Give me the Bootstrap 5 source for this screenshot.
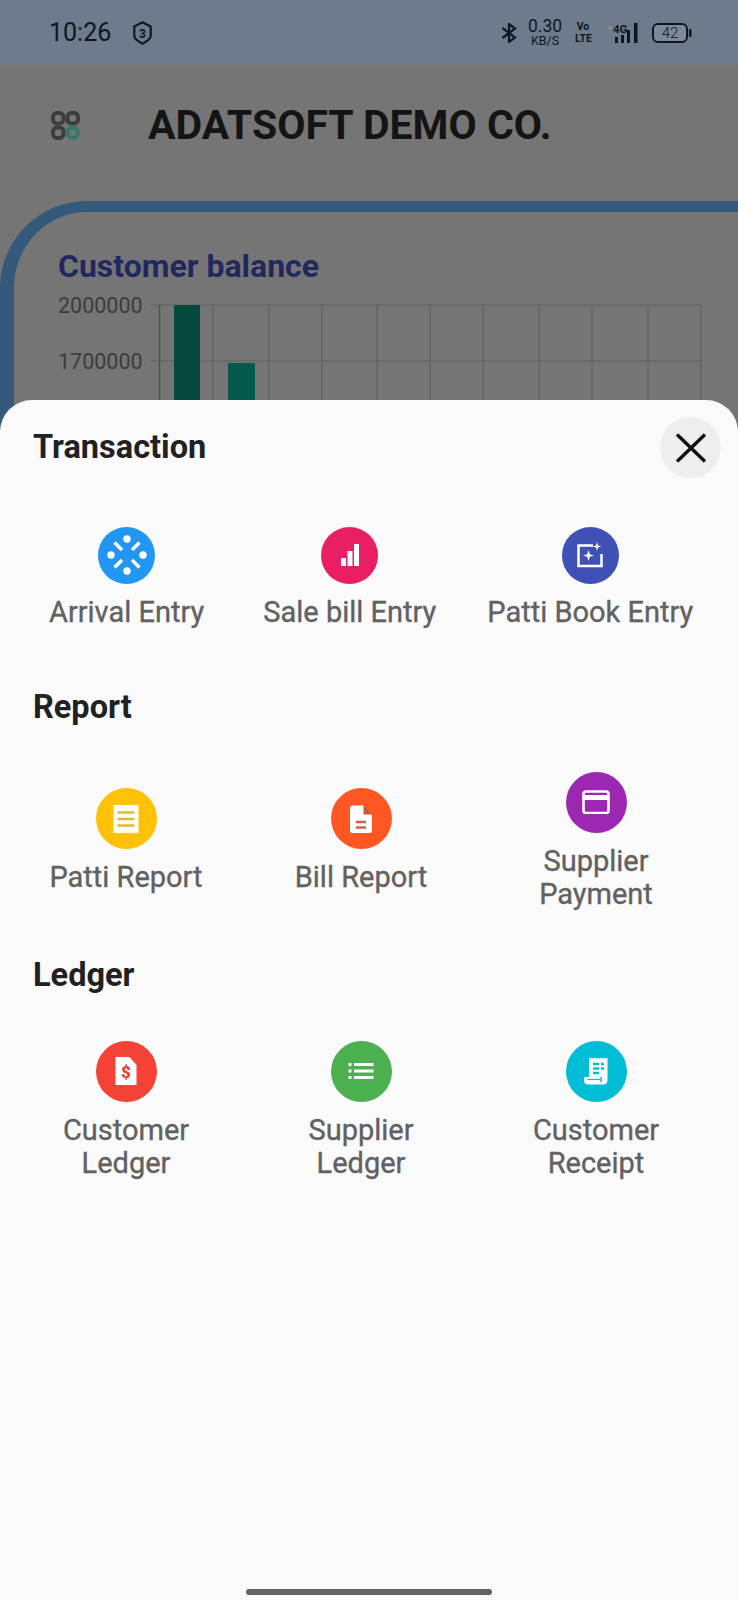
<!doctype html>
<html lang="en"><head><meta charset="utf-8"><title>Adatsoft</title>
<link href="https://cdn.jsdelivr.net/npm/bootstrap@5.3.0/dist/css/bootstrap.min.css" rel="stylesheet">
<style>
html,body{margin:0;height:1600px;overflow:hidden;background:#757575}
body{font-family:Roboto,"Liberation Sans",sans-serif;width:738px;position:relative}
.sbar{height:65px;background:#6d7b8d;padding:0 46px 0 49px;color:#10161f}
.clock{font-size:25px;font-weight:400;line-height:1}
.shield{margin-left:22px}
.speed{width:36px;margin-left:10px;text-align:center;line-height:1}
.speed-a{font-size:17.500px}
.speed-b{font-size:12.500px}
.volte{width:16px;margin-left:12px;font-size:10.500px;font-weight:700;line-height:11.500px;text-align:center}
.net{margin-left:17px}
.batt{margin-left:11px}
.appbar{height:136px;padding:0 0 16px 51px}
.apptitle{margin:0 0 0 68px;font-size:41px;font-weight:700;color:#141414;line-height:1}
.frame{height:1400px;border-top:11px solid #34597a;border-left:14px solid #34597a;border-top-left-radius:87px;padding:37px 0 0 44px}
.frametitle{margin:0;font-size:32px;font-weight:700;color:#22285f;line-height:35px}
.plot{display:block;margin:9px 0 0 -58px}
.sheet{position:absolute;left:0;right:0;top:400px;bottom:0;background:#fafafa;border-radius:32px 32px 0 0;padding-top:29px}
.closebtn{position:absolute;top:17px;right:17px;width:61px;height:61px;background:#eee}
.sect{margin:0 0 0 33px;font-size:32.500px;font-weight:700;color:#212121;line-height:37.500px}
.txrow{padding-left:49px;margin-top:60px}
.txa{margin-right:59px}.txb{margin-right:51px}
.dot{width:61px;height:61px}
.dot-s{width:57px;height:57px}
.lbl{font-size:29px;line-height:32.800px;color:#616161;font-weight:400;text-align:center;margin-top:12px;-webkit-text-stroke:.35px #616161}
.gridrow{width:705px;margin-left:8.500px}
.r2{margin-top:45px}
.r3{margin-top:46px}
.s2{margin-top:61px}
.s3{margin-top:47px}
.c-blue{background:#2196f3}.c-pink{background:#e91e63}.c-ind{background:#3f51b5}
.c-amb{background:#ffc107}.c-org{background:#ff5722}.c-pur{background:#9c27b0}
.c-red{background:#f44336}.c-grn{background:#4caf50}.c-cyn{background:#00bcd4}
.handle{position:absolute;left:246px;top:1189px;width:246px;height:6px;background:#616161}
</style></head><body>
<div class="sbar d-flex align-items-center">
 <span class="clock">10:26</span>
 <svg class="shield" width="19" height="24" viewBox="0 0 19 24"><path d="M9.500 1.300 17.700 5.500V15c0 2.500-4 5.500-8.200 7.700C5.300 20.500 1.300 17.500 1.300 15V5.500Z" fill="none" stroke="#10161f" stroke-width="2.200" stroke-linejoin="round"/><text x="9.500" y="16.500" font-size="12" font-weight="700" text-anchor="middle" fill="#10161f" font-family="Roboto">3</text></svg>
 <div class="ms-auto d-flex align-items-center">
  <svg width="16" height="20" viewBox="0 0 16 20"><path d="M1.500 5 14 14.500 8 19V1l6 4.500L1.500 15" fill="none" stroke="#10161f" stroke-width="2.200"/></svg>
  <div class="speed"><div class="speed-a">0.30</div><div class="speed-b">KB/S</div></div>
  <div class="volte"><div>Vo</div><div>LTE</div></div>
  <svg class="net" width="33" height="22" viewBox="0 0 33 22"><circle cx="2" cy="6" r="2" fill="#7f8b9b"/><text x="5" y="11" font-size="11.500" font-weight="700" fill="#10161f" font-family="Roboto">4G</text><path d="M7 15h3v6H7zM13 13h3v8h-3zM19 8h3v13h-3zM26 1h3.500v20H26z" fill="#10161f"/></svg>
  <svg class="batt" width="40" height="20" viewBox="0 0 40 20"><rect x="1" y="1" width="34" height="18" rx="5" fill="#7d8a9b" stroke="#10161f" stroke-width="2"/><rect x="37" y="6" width="2.500" height="8" rx="1" fill="#10161f"/><text x="18" y="15" font-size="15" text-anchor="middle" fill="#10161f" font-family="Roboto" font-weight="300">42</text></svg>
 </div>
</div>
<div class="appbar d-flex align-items-center">
 <svg width="29" height="29" viewBox="0 0 29 29" fill="none" stroke-width="4"><g stroke="#3d3d3d"><rect x="2" y="2" width="10.500" height="10.500" rx="4"/><rect x="16.500" y="2" width="10.500" height="10.500" rx="4"/><rect x="2" y="16.500" width="10.500" height="10.500" rx="4"/></g><circle cx="21.700" cy="21.700" r="5.200" stroke="#33776a"/></svg>
 <h1 class="apptitle">ADATSOFT DEMO CO.</h1>
</div>
<div class="frame">
 <h2 class="frametitle">Customer balance</h2>
 <svg class="plot" width="724" height="120" viewBox="0 -12 724 120">
  <g stroke="#606060" stroke-width="1.200" fill="none">
   <path d="M159 0H701M159 56H701M150 0H159M150 56H159"/>
   <path d="M213 0V108M269 0V108M322 0V108M377 0V108M430 0V108M483 0V108M539 0V108M592 0V108M648 0V108M701 0V108"/>
   <path d="M159.500 0V108" stroke="#505050" stroke-width="1.500"/>
  </g>
  <rect x="174" y="0" width="26" height="108" fill="#05493d"/>
  <rect x="228" y="58" width="27" height="50" fill="#065a4b"/>
  <g font-size="21.500" fill="#3c3c3c" font-family="Roboto">
   <text x="58" y="8">2000000</text><text x="58" y="64">1700000</text>
  </g>
 </svg>
</div>

<div class="sheet">
 <button type="button" class="closebtn btn rounded-circle p-0 border-0 d-flex align-items-center justify-content-center" aria-label="Close">
  <svg width="32" height="30" viewBox="0 0 32 30"><path d="M2 1.500 30 28.500M30 1.500 2 28.500" stroke="#111" stroke-width="3.400" fill="none"/></svg>
 </button>
 <h3 class="sect">Transaction</h3>
 <div class="txrow d-flex">
  <div class="txa d-flex flex-column align-items-center">
   <div class="dot-s c-blue rounded-circle d-flex align-items-center justify-content-center">
    <svg width="40" height="40" viewBox="-20 -20 40 40"><g fill="#fff"><circle cy="-16" r="3.700"/><circle cy="16" r="3.700"/><circle cx="-16" r="3.700"/><circle cx="16" r="3.700"/></g><path d="M-5-5-12.500-12.500M5-5 12.500-12.500M-5 5-12.500 12.500M5 5 12.500 12.500" stroke="#fff" stroke-width="3.400"/></svg>
   </div>
   <div class="lbl">Arrival Entry</div>
  </div>
  <div class="txb d-flex flex-column align-items-center">
   <div class="dot-s c-pink rounded-circle d-flex align-items-center justify-content-center">
    <svg width="24" height="24" viewBox="-12 -12 24 24"><path d="M-9 3H-4V11H-9ZM-2.500-4H2.500V11H-2.500ZM4-11H9V11H4Z" fill="#fff"/></svg>
   </div>
   <div class="lbl">Sale bill Entry</div>
  </div>
  <div class="d-flex flex-column align-items-center">
   <div class="dot-s c-ind rounded-circle d-flex align-items-center justify-content-center">
    <svg width="28" height="28" viewBox="-14 -14 28 28"><path d="M3-9.500H-11.500V11H11.500V-1" fill="none" stroke="#fff" stroke-width="2.500"/><path d="M-1.500-5-.2-.8 4 .500-.2 1.800-1.500 6-2.800 1.800-7 .500-2.800-.8ZM7-13 8-9.500 11.500-8.500 8-7.500 7-4 6-7.500 2.500-8.500 6-9.500Z" fill="#fff"/></svg>
   </div>
   <div class="lbl">Patti Book Entry</div>
  </div>
 </div>

 <h3 class="sect s2">Report</h3>
 <div class="gridrow r2 row g-0 align-items-center">
  <div class="col-4 d-flex flex-column align-items-center">
   <div class="dot c-amb rounded-circle d-flex align-items-center justify-content-center">
    <svg width="28" height="32" viewBox="-14 -16 28 32"><path d="M-12.500-14.500-11-13.500-9.500-14.500-8-13.500-6.500-14.500-5-13.500-3.500-14.500-2-13.500-.5-14.500 1-13.500 2.500-14.500 4-13.500 5.500-14.500 7-13.500 8.500-14.500 10-13.500 12.500-14.500V14.500L10 13.500 8.500 14.500 7 13.500 5.500 14.500 4 13.500 2.500 14.500 1 13.500-.5 14.500-2 13.500-3.500 14.500-5 13.500-6.500 14.500-8 13.500-9.500 14.500-11 13.500-12.500 14.500Z" fill="#fff"/><path d="M-8.500-6.500H8.500M-8.500 0H8.500M-8.500 6.500H8.500" stroke="#e3b92b" stroke-width="2.500"/></svg>
   </div>
   <div class="lbl">Patti Report</div>
  </div>
  <div class="col-4 d-flex flex-column align-items-center">
   <div class="dot c-org rounded-circle d-flex align-items-center justify-content-center">
    <svg width="24" height="30" viewBox="-12 -15 24 30"><path d="M-8.500-13.500H2L11-4.500V11.500Q11 14 8.500 14H-8.500Q-11 14-11 11.500V-11Q-11-13.500-8.500-13.500Z" fill="#fff"/><path d="M2.500-13.500 2.500-4.500H11.500Z" fill="#c9583a"/><path d="M-5 3H5M-5 8.500H5" stroke="#d9603e" stroke-width="2.500"/></svg>
   </div>
   <div class="lbl">Bill Report</div>
  </div>
  <div class="col-4 d-flex flex-column align-items-center">
   <div class="dot c-pur rounded-circle d-flex align-items-center justify-content-center">
    <svg width="28" height="24" viewBox="-14 -12 28 24"><rect x="-12.500" y="-10.500" width="25" height="21.500" rx="2.500" fill="none" stroke="#fff" stroke-width="2.600"/><path d="M-12-4.500H12" stroke="#fff" stroke-width="5"/></svg>
   </div>
   <div class="lbl">Supplier<br>Payment</div>
  </div>
 </div>

 <h3 class="sect s3">Ledger</h3>
 <div class="gridrow r3 row g-0 align-items-start">
  <div class="col-4 d-flex flex-column align-items-center">
   <div class="dot c-red rounded-circle d-flex align-items-center justify-content-center">
    <svg width="24" height="30" viewBox="-12 -15 24 30"><path d="M-10.500-14H3.500L10.500-6V14H-10.500Z" fill="#fff"/><text x="0" y="7" font-size="17" font-weight="900" text-anchor="middle" fill="#e14638" font-family="Roboto">$</text></svg>
   </div>
   <div class="lbl">Customer<br>Ledger</div>
  </div>
  <div class="col-4 d-flex flex-column align-items-center">
   <div class="dot c-grn rounded-circle d-flex align-items-center justify-content-center">
    <svg width="26" height="20" viewBox="-13 -10 26 20"><path d="M-7-6.500H12.500M-7 0H12.500M-7 6.500H12.500" stroke="#fff" stroke-width="3"/><path d="M-12.500-8H-9.500V-5H-12.500ZM-12.500-1.500H-9.500V1.500H-12.500ZM-12.500 5H-9.500V8H-12.500Z" fill="#fff"/></svg>
   </div>
   <div class="lbl">Supplier<br>Ledger</div>
  </div>
  <div class="col-4 d-flex flex-column align-items-center">
   <div class="dot c-cyn rounded-circle d-flex align-items-center justify-content-center">
    <svg width="26" height="30" viewBox="-13 -15 26 30"><path d="M-7-13.500-5.500-12.300-4-13.500-2.500-12.300-1-13.500.5-12.300 2-13.500 3.500-12.300 5-13.500 6.500-12.300 8-13.500 9.500-12.300 11.500-13.500V9C11.500 12 10 13.500 7.500 13.500H-8C-10.500 13.500-12 12-12 9V6H-7Z" fill="#fff"/><path d="M-3-7H3M-3-2.500H3M-3 2H3" stroke="#00bcd4" stroke-width="2.400"/><path d="M5-7H8M5-2.500H8" stroke="#00bcd4" stroke-width="2.400"/><path d="M5 6V11" stroke="#00bcd4" stroke-width="1.500"/><path d="M-8.500 8.500H4" stroke="#00bcd4" stroke-width="1.200"/></svg>
   </div>
   <div class="lbl">Customer<br>Receipt</div>
  </div>
 </div>
 <div class="handle rounded-pill"></div>
</div>
</body></html>
